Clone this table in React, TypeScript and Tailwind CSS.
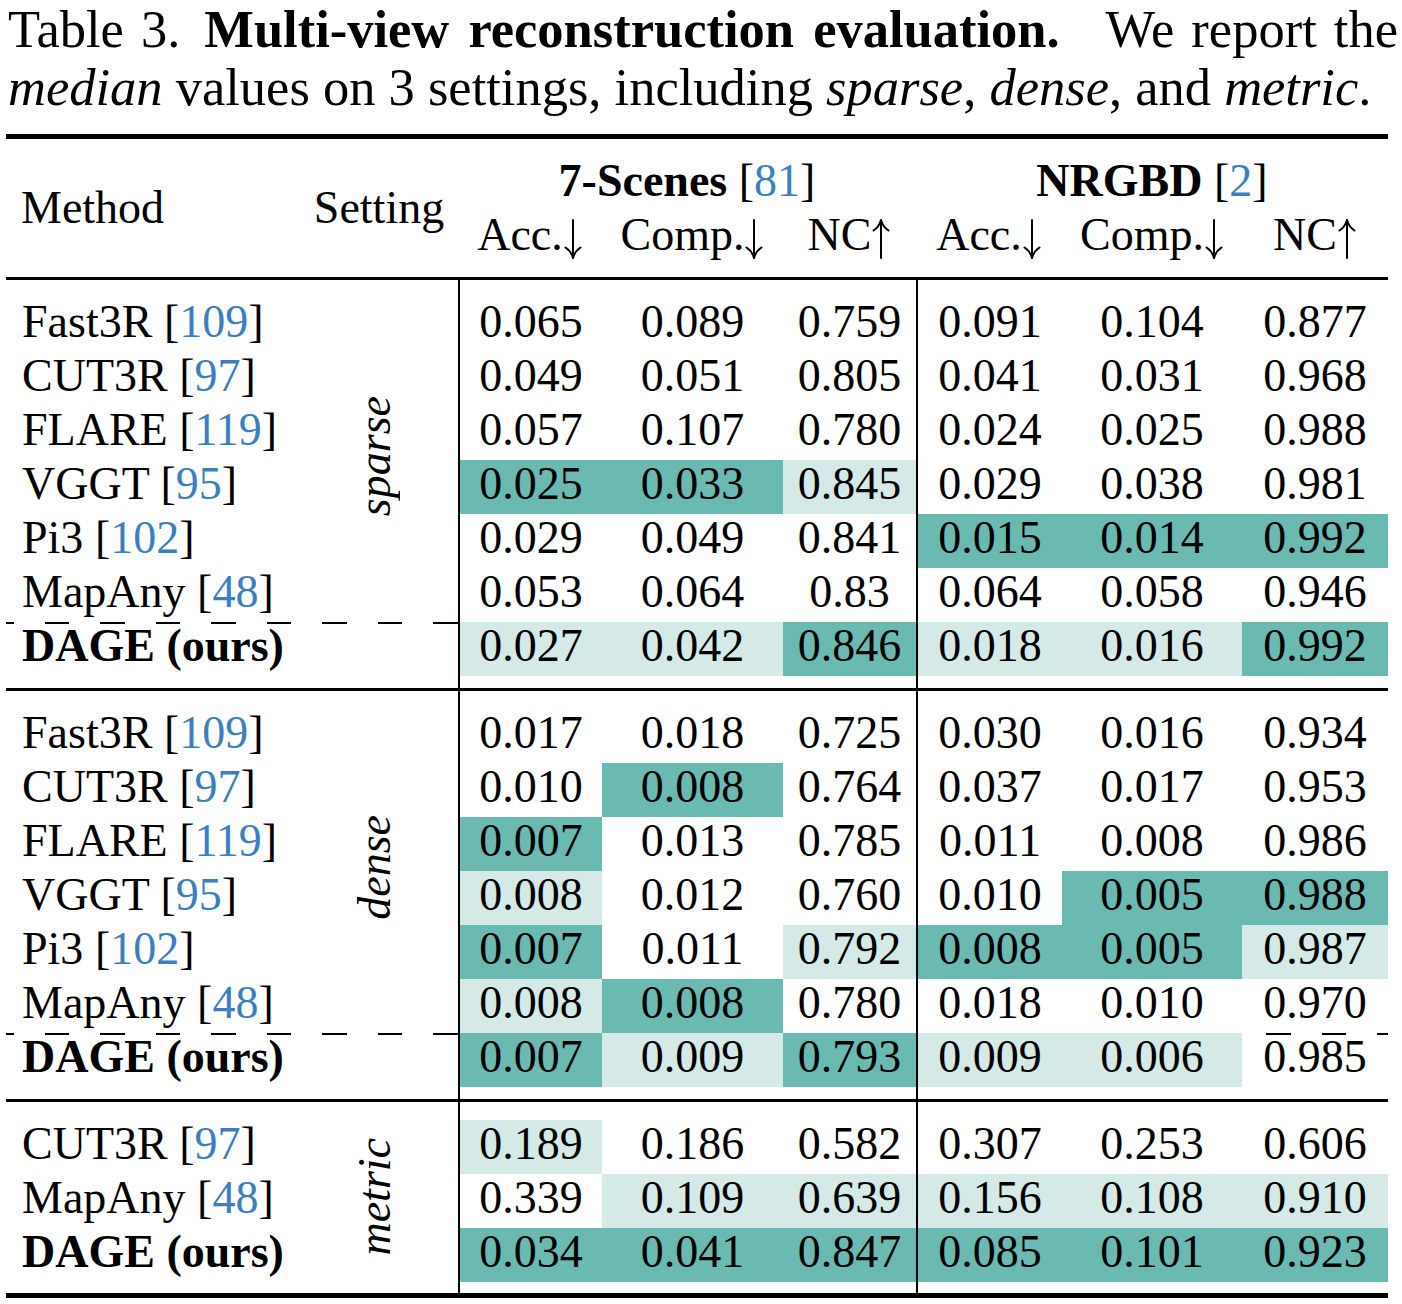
import React from "react";

type Row = { name: string; ref?: string; ours?: boolean; v: string[] };

// "*" = best (dark teal), "+" = second (light teal)
const SPARSE: Row[] = [
  { name: "Fast3R", ref: "109", v: ["0.065", "0.089", "0.759", "0.091", "0.104", "0.877"] },
  { name: "CUT3R", ref: "97", v: ["0.049", "0.051", "0.805", "0.041", "0.031", "0.968"] },
  { name: "FLARE", ref: "119", v: ["0.057", "0.107", "0.780", "0.024", "0.025", "0.988"] },
  { name: "VGGT", ref: "95", v: ["*0.025", "*0.033", "+0.845", "0.029", "0.038", "0.981"] },
  { name: "Pi3", ref: "102", v: ["0.029", "0.049", "0.841", "*0.015", "*0.014", "*0.992"] },
  { name: "MapAny", ref: "48", v: ["0.053", "0.064", "0.83", "0.064", "0.058", "0.946"] },
  { name: "DAGE (ours)", ours: true, v: ["+0.027", "+0.042", "*0.846", "+0.018", "+0.016", "*0.992"] },
];

const DENSE: Row[] = [
  { name: "Fast3R", ref: "109", v: ["0.017", "0.018", "0.725", "0.030", "0.016", "0.934"] },
  { name: "CUT3R", ref: "97", v: ["0.010", "*0.008", "0.764", "0.037", "0.017", "0.953"] },
  { name: "FLARE", ref: "119", v: ["*0.007", "0.013", "0.785", "0.011", "0.008", "0.986"] },
  { name: "VGGT", ref: "95", v: ["+0.008", "0.012", "0.760", "0.010", "*0.005", "*0.988"] },
  { name: "Pi3", ref: "102", v: ["*0.007", "0.011", "+0.792", "*0.008", "*0.005", "+0.987"] },
  { name: "MapAny", ref: "48", v: ["+0.008", "*0.008", "0.780", "0.018", "0.010", "0.970"] },
  { name: "DAGE (ours)", ours: true, v: ["*0.007", "+0.009", "*0.793", "+0.009", "+0.006", "0.985"] },
];

const METRIC: Row[] = [
  { name: "CUT3R", ref: "97", v: ["+0.189", "0.186", "0.582", "0.307", "0.253", "0.606"] },
  { name: "MapAny", ref: "48", v: ["0.339", "+0.109", "+0.639", "+0.156", "+0.108", "+0.910"] },
  { name: "DAGE (ours)", ours: true, v: ["*0.034", "*0.041", "*0.847", "*0.085", "*0.101", "*0.923"] },
];

const HEADS: [string, boolean][] = [
  ["Acc.", false],
  ["Comp.", false],
  ["NC", true],
  ["Acc.", false],
  ["Comp.", false],
  ["NC", true],
];

function Arrow({ up }: { up?: boolean }) {
  return (
    <svg
      viewBox="0 0 20 40"
      className={`inline-block h-[40px] w-[20px] align-[-9px] ${up ? "rotate-180" : ""}`}
      fill="none"
      stroke="black"
      strokeWidth="2"
      strokeLinecap="round"
    >
      <path d="M10 1 V38" />
      <path d="M2.5 28.5 Q8 32 10 39 Q12 32 17.5 28.5" />
    </svg>
  );
}

function Ref({ n }: { n: string }) {
  return (
    <>
      [<span className="text-[#3b7fc0]">{n}</span>]
    </>
  );
}

function NameCell({ r }: { r: Row }) {
  return (
    <td className="p-0 pl-[16px] text-left align-top whitespace-nowrap">
      {r.ours ? (
        <span className="font-bold">{r.name}</span>
      ) : (
        <>
          {r.name} <Ref n={r.ref!} />
        </>
      )}
    </td>
  );
}

function Val({ s, edge }: { s: string; edge: boolean }) {
  const tone =
    s[0] === "*" ? "bg-[#6bbab1]" : s[0] === "+" ? "bg-[#d5eae7]" : "";
  const text = tone ? s.slice(1) : s;
  return (
    <td
      className={`p-0 text-center align-top ${tone} ${
        edge ? "border-l-2 border-black" : ""
      }`}
    >
      {text}
    </td>
  );
}

function Spacer({ h }: { h: string }) {
  return (
    <tr className={h}>
      <td className="p-0" />
      <td className="p-0" />
      <td className="border-l-2 border-black p-0" />
      <td className="p-0" />
      <td className="p-0" />
      <td className="border-l-2 border-black p-0" />
      <td className="p-0" />
      <td className="p-0" />
    </tr>
  );
}

function Rule({ thick }: { thick?: boolean }) {
  return (
    <tr>
      <td
        colSpan={8}
        className={`p-0 bg-black ${thick ? "h-[5px]" : "h-[3px]"}`}
      />
    </tr>
  );
}

function Block({
  label,
  rows,
  dashed,
}: {
  label: string;
  rows: Row[];
  dashed?: boolean;
}) {
  const main = dashed ? rows.slice(0, -1) : rows;
  const last = dashed ? rows[rows.length - 1] : null;
  return (
    <>
      <Spacer h="h-[18px]" />
      {main.map((r, i) => (
        <tr key={r.name} className="h-[54px]">
          <NameCell r={r} />
          {i === 0 && (
            <td
              rowSpan={main.length}
              className="p-0 pr-[10px] text-center align-middle"
            >
              <span className="inline-block rotate-180 italic [writing-mode:vertical-rl]">
                {label}
              </span>
            </td>
          )}
          {r.v.map((s, j) => (
            <Val key={j} s={s} edge={j === 0 || j === 3} />
          ))}
        </tr>
      ))}
      {last && (
        <tr className="h-[54px] bg-[image:repeating-linear-gradient(90deg,#000_0px,#000_8px,transparent_8px,transparent_39px,#000_39px,#000_55.5px)] bg-[length:100%_2px] bg-top bg-no-repeat">
          <NameCell r={last} />
          <td className="p-0" />
          {last.v.map((s, j) => (
            <Val key={j} s={s} edge={j === 0 || j === 3} />
          ))}
        </tr>
      )}
      <Spacer h={dashed ? "h-[12px]" : "h-[11px]"} />
    </>
  );
}

export default function App() {
  return (
    <div className="min-h-[1304px] w-[1402px] bg-white text-black font-['Liberation_Serif','Times_New_Roman',serif]">
      <div className="pl-[8px] text-[52.5px]">
        <div className="flex w-[1390px] whitespace-nowrap leading-[58px] [word-spacing:4px]">
          <span>Table 3.</span>
          <span className="ml-[24px] font-bold [word-spacing:6px]">
            Multi-view reconstruction evaluation.
          </span>
          <span className="ml-auto">We report the</span>
        </div>
        <div className="leading-[58px]">
          <i>median</i> values on 3 settings, including <i>sparse</i>,{" "}
          <i>dense</i>, and <i>metric</i>.
        </div>
      </div>

      <div className="mt-[18px] pl-[6px]">
        <table className="w-[1382px] table-fixed border-separate border-spacing-0 text-[46px] leading-[47px]">
          <colgroup>
            <col className="w-[294px]" />
            <col className="w-[158px]" />
            <col className="w-[144px]" />
            <col className="w-[181px]" />
            <col className="w-[133px]" />
            <col className="w-[146px]" />
            <col className="w-[180px]" />
            <col className="w-[146px]" />
          </colgroup>
          <thead>
            <Rule thick />
            <tr className="h-[18px]">
              <td colSpan={8} className="p-0" />
            </tr>
            <tr className="h-[54px]">
              <td rowSpan={2} className="p-0 pl-[15px] pt-[27px] text-left align-top">
                Method
              </td>
              <td rowSpan={2} className="p-0 pt-[27px] text-center align-top">
                Setting
              </td>
              <td colSpan={3} className="p-0 text-center align-top">
                <span className="font-bold">7-Scenes</span> <Ref n="81" />
              </td>
              <td colSpan={3} className="p-0 text-center align-top">
                <span className="font-bold">NRGBD</span> <Ref n="2" />
              </td>
            </tr>
            <tr className="h-[54px]">
              {HEADS.map(([h, up], i) => (
                <td key={i} className="p-0 text-center align-top whitespace-nowrap">
                  {h}
                  <Arrow up={up} />
                </td>
              ))}
            </tr>
            <tr className="h-[12px]">
              <td colSpan={8} className="p-0" />
            </tr>
            <Rule />
          </thead>
          <tbody>
            <Block label="sparse" rows={SPARSE} dashed />
            <Rule />
            <Block label="dense" rows={DENSE} dashed />
            <Rule />
            <Block label="metric" rows={METRIC} />
            <Rule thick />
          </tbody>
        </table>
      </div>
    </div>
  );
}
